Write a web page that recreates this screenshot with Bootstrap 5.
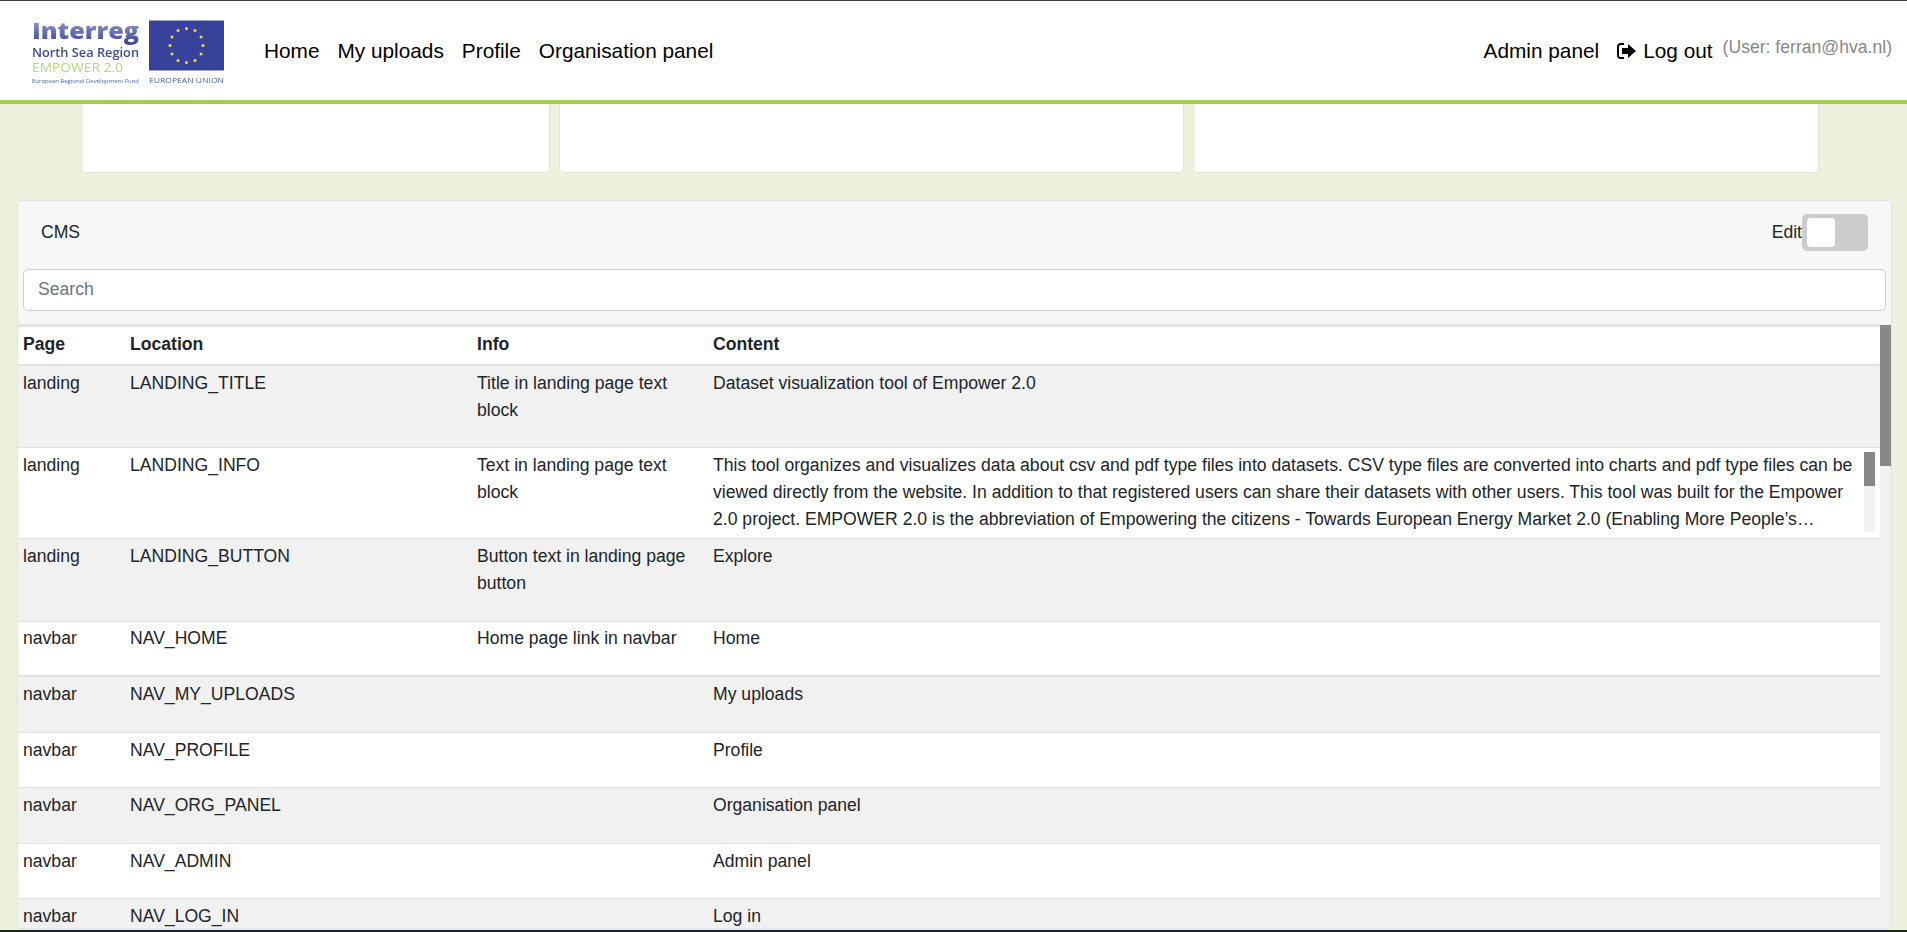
<!DOCTYPE html>
<html lang="en">

<head>
    <meta charset="UTF-8">
    <meta name="viewport" content="width=device-width, initial-scale=1">
    <title>Empower 2.0 CMS</title>
    <link href="https://cdn.jsdelivr.net/npm/bootstrap@5.3.0/dist/css/bootstrap.min.css" rel="stylesheet">
    <style>
        html,
        body {
            height: 100%;
            overflow: hidden;
        }

        body {
            font-family: "Liberation Sans", Arial, sans-serif;
            font-size: 17.6px;
            color: #212529;
            background-color: #edf2dd;
            border-top: 1px solid #3c3c46;
            border-bottom: 2px solid #1f2328;
        }

        .top-nav {
            height: 103px;
            flex: none;
            padding: 0 15px 0 30px;
            background-color: #fff;
            border-bottom: 4px solid #a4cc4a;
        }

        .top-nav .navbar-brand {
            padding: 0;
            margin-right: 38px;
            line-height: 0;
        }

        .top-nav .navbar-nav .nav-link {
            padding: 0;
            font-size: 20.8px;
            color: #000;
        }

        .main-links {
            gap: 18px;
        }

        .side-links {
            gap: 18px;
        }

        .top-nav .navbar-nav .logout-link {
            gap: 7px;
        }

        .user-note {
            margin-left: -8px;
            font-size: 17.6px;
            color: #888;
            transform: translateY(-3px);
        }

        .stat-row {
            flex: none;
            gap: 9px;
            padding: 0 88px 0 81px;
        }

        .stat-tile {
            height: 69px;
            background-color: #fff;
            border: 1px solid #dfe2e6;
            border-top: 0;
            border-radius: 0 0 5px 5px;
        }

        .stat-a {
            width: 469px;
        }

        .stat-b {
            width: 625px;
        }

        .stat-c {
            flex: 1 1 0;
        }

        .page-body {
            flex: 1 1 0;
            min-height: 0;
            padding: 27px 15px 1px 17px;
        }

        .cms-card {
            height: 100%;
            overflow: hidden;
            background-color: #f7f7f7;
            border: 1px solid #dfe2e6;
            border-radius: 5px;
        }

        .cms-head {
            height: 62px;
            margin-bottom: 6px;
            padding: 0 23px;
        }

        .edit-toggle {
            width: 66px;
            height: 37px;
            padding: 4px 5px;
            background-color: #ccc;
            border-radius: 5px;
        }

        .edit-knob {
            width: 28px;
            height: 29px;
            background-color: #fff;
            border-radius: 4px;
        }

        .cms-search {
            padding: 0 5px;
        }

        .cms-search .form-control {
            height: 42px;
            padding: 5px 14px 6px;
            font-size: 17.6px;
            border-color: #ced1d8;
            border-radius: 5px;
        }

        .cms-search .form-control::placeholder {
            color: #6c757d;
        }

        .table-box {
            position: relative;
            height: 606px;
            margin-top: 13px;
            padding-right: 11px;
            overflow: hidden;
            background-color: #f1f1f1;
        }

        .cms-table {
            --bs-table-striped-bg: #f1f1f1;
            --bs-table-striped-color: #212529;
            --bs-table-bg: #fff;
            table-layout: fixed;
            margin-bottom: 0;
            line-height: 27px;
        }

        .cms-table th {
            height: 39px;
            padding: 2px 4px 6px;
            font-weight: 700;
            border-top: 3px solid #dfe2e6;
            border-bottom: 2px solid #dee2e6;
        }

        .cms-table td {
            height: 55px;
            padding: 4px 4px 23.5px;
        }

        .cms-table th:first-child,
        .cms-table td:first-child {
            padding-left: 5px;
        }

        .cms-table .col-page {
            width: 108px;
        }

        .cms-table .col-location {
            width: 347px;
        }

        .cms-table .col-info {
            width: 236px;
        }

        .cms-table .row-long td {
            height: 90px;
            padding-bottom: 5px;
        }

        .cms-table .row-heavy td {
            padding-top: 3px;
            border-bottom-width: 2px;
        }

        .cell-long {
            display: -webkit-box;
            width: 1147px;
            overflow: hidden;
            -webkit-box-orient: vertical;
            -webkit-line-clamp: 3;
        }

        .scroll-track {
            position: absolute;
            top: 128px;
            left: 1846px;
            width: 11px;
            height: 80px;
            background-color: #f1f1f1;
        }

        .scroll-thumb {
            width: 100%;
            background-color: #888;
        }

        .inner-thumb {
            height: 34px;
        }

        .outer-thumb {
            position: absolute;
            top: 1px;
            right: 0;
            width: 11px;
            height: 141px;
        }
    </style>
</head>

<body class="d-flex flex-column">

    <!-- Navbar -->
    <nav class="navbar navbar-expand top-nav">
        <a class="navbar-brand" href="#">
            <svg width="196" height="66" viewBox="30 18.500 196 66" role="img" aria-label="Interreg North Sea Region Empower 2.0">
                <defs>
                    <filter id="soft"><feGaussianBlur stdDeviation="0.4"/></filter>
                    <linearGradient id="fade" x1="0" y1="0" x2="0" y2="1">
                        <stop offset="0" stop-color="#aab2de"/>
                        <stop offset="1" stop-color="#343f96"/>
                    </linearGradient>
                </defs>
                <g filter="url(#soft)" font-family="Open Sans, Liberation Sans, sans-serif">
                    <text x="32" y="39" font-size="23" font-weight="800" fill="url(#fade)" textLength="107" lengthAdjust="spacingAndGlyphs">Interreg</text>
                    <text x="32" y="57" font-size="12" fill="#3c4a9c" font-weight="600" textLength="107" lengthAdjust="spacingAndGlyphs">North Sea Region</text>
                    <text x="32" y="72" font-size="13.5" fill="#b5d77a" textLength="91" lengthAdjust="spacingAndGlyphs">EMPOWER 2.0</text>
                    <text x="32" y="83" font-size="5" fill="#5a64a8" textLength="107" lengthAdjust="spacingAndGlyphs">European Regional Development Fund</text>
                    <text x="149" y="83" font-size="6.5" fill="#4d58a5" textLength="75" lengthAdjust="spacingAndGlyphs">EUROPEAN UNION</text>
                    <rect x="149" y="21" width="75" height="50" fill="#37429a"/>
                    <g fill="#f2dc2e">
                        <circle cx="186.500" cy="29" r="1.500"/>
                        <circle cx="195" cy="31" r="1.500"/>
                        <circle cx="201" cy="37.500" r="1.500"/>
                        <circle cx="203" cy="46" r="1.500"/>
                        <circle cx="201" cy="54.500" r="1.500"/>
                        <circle cx="195" cy="61" r="1.500"/>
                        <circle cx="186.500" cy="63" r="1.500"/>
                        <circle cx="178" cy="61" r="1.500"/>
                        <circle cx="172" cy="54.500" r="1.500"/>
                        <circle cx="170" cy="46" r="1.500"/>
                        <circle cx="172" cy="37.500" r="1.500"/>
                        <circle cx="178" cy="31" r="1.500"/>
                    </g>
                </g>
            </svg>
        </a>
        <div class="navbar-nav main-links">
            <a class="nav-link" href="#">Home</a>
            <a class="nav-link" href="#">My uploads</a>
            <a class="nav-link" href="#">Profile</a>
            <a class="nav-link" href="#">Organisation panel</a>
        </div>
        <div class="navbar-nav side-links ms-auto align-items-center">
            <a class="nav-link" href="#">Admin panel</a>
            <a class="nav-link d-flex align-items-center logout-link" href="#">
                <svg width="19" height="16" viewBox="0 0 19 16">
                    <path d="M7 1H3.500A2.500 2.500 0 0 0 1 3.500v9A2.500 2.500 0 0 0 3.500 15H7" fill="none" stroke="#000" stroke-width="2"/>
                    <path d="M5 5h6V1l8 7-8 7v-4H5z" fill="#000"/>
                </svg>
                Log out
            </a>
            <span class="user-note">(User: ferran@hva.nl)</span>
        </div>
    </nav>

    <!-- Cards cut off by the navbar -->
    <div class="d-flex stat-row">
        <div class="stat-tile stat-a"></div>
        <div class="stat-tile stat-b"></div>
        <div class="stat-tile stat-c"></div>
    </div>

    <div class="page-body">
        <div class="cms-card">
            <div class="d-flex align-items-center justify-content-between cms-head">
                <span>CMS</span>
                <div class="d-flex align-items-center">
                    <span>Edit</span>
                    <div class="edit-toggle">
                        <div class="edit-knob"></div>
                    </div>
                </div>
            </div>

            <div class="cms-search">
                <input type="text" class="form-control" placeholder="Search">
            </div>

            <div class="table-box">
                <table class="table table-striped cms-table">
                    <thead>
                        <tr>
                            <th class="col-page">Page</th>
                            <th class="col-location">Location</th>
                            <th class="col-info">Info</th>
                            <th>Content</th>
                        </tr>
                    </thead>
                    <tbody>
                        <tr>
                            <td>landing</td>
                            <td>LANDING_TITLE</td>
                            <td>Title in landing page text block</td>
                            <td>Dataset visualization tool of Empower 2.0</td>
                        </tr>
                        <tr class="row-long">
                            <td>landing</td>
                            <td>LANDING_INFO</td>
                            <td>Text in landing page text block</td>
                            <td>
                                <div class="cell-long">This tool organizes and visualizes data about csv and pdf type files into datasets. CSV type files are converted into charts and pdf type files can be viewed directly from the website. In addition to that registered users can share their datasets with other users. This tool was built for the Empower 2.0 project. EMPOWER 2.0 is the abbreviation of Empowering the citizens - Towards European Energy Market 2.0 (Enabling More People’s Participation in the Energy Transition and making it easier for everyone to take part)</div>
                            </td>
                        </tr>
                        <tr>
                            <td>landing</td>
                            <td>LANDING_BUTTON</td>
                            <td>Button text in landing page button</td>
                            <td>Explore</td>
                        </tr>
                        <tr class="row-heavy">
                            <td>navbar</td>
                            <td>NAV_HOME</td>
                            <td>Home page link in navbar</td>
                            <td>Home</td>
                        </tr>
                        <tr>
                            <td>navbar</td>
                            <td>NAV_MY_UPLOADS</td>
                            <td></td>
                            <td>My uploads</td>
                        </tr>
                        <tr>
                            <td>navbar</td>
                            <td>NAV_PROFILE</td>
                            <td></td>
                            <td>Profile</td>
                        </tr>
                        <tr>
                            <td>navbar</td>
                            <td>NAV_ORG_PANEL</td>
                            <td></td>
                            <td>Organisation panel</td>
                        </tr>
                        <tr>
                            <td>navbar</td>
                            <td>NAV_ADMIN</td>
                            <td></td>
                            <td>Admin panel</td>
                        </tr>
                        <tr>
                            <td>navbar</td>
                            <td>NAV_LOG_IN</td>
                            <td></td>
                            <td>Log in</td>
                        </tr>
                    </tbody>
                </table>

                <!-- scrollbars sit on top of the table -->
                <div class="scroll-track">
                    <div class="scroll-thumb inner-thumb"></div>
                </div>
                <div class="scroll-thumb outer-thumb"></div>
            </div>
        </div>
    </div>

    <script src="https://cdn.jsdelivr.net/npm/bootstrap@5.3.0/dist/js/bootstrap.bundle.min.js"></script>

</body>

</html>
